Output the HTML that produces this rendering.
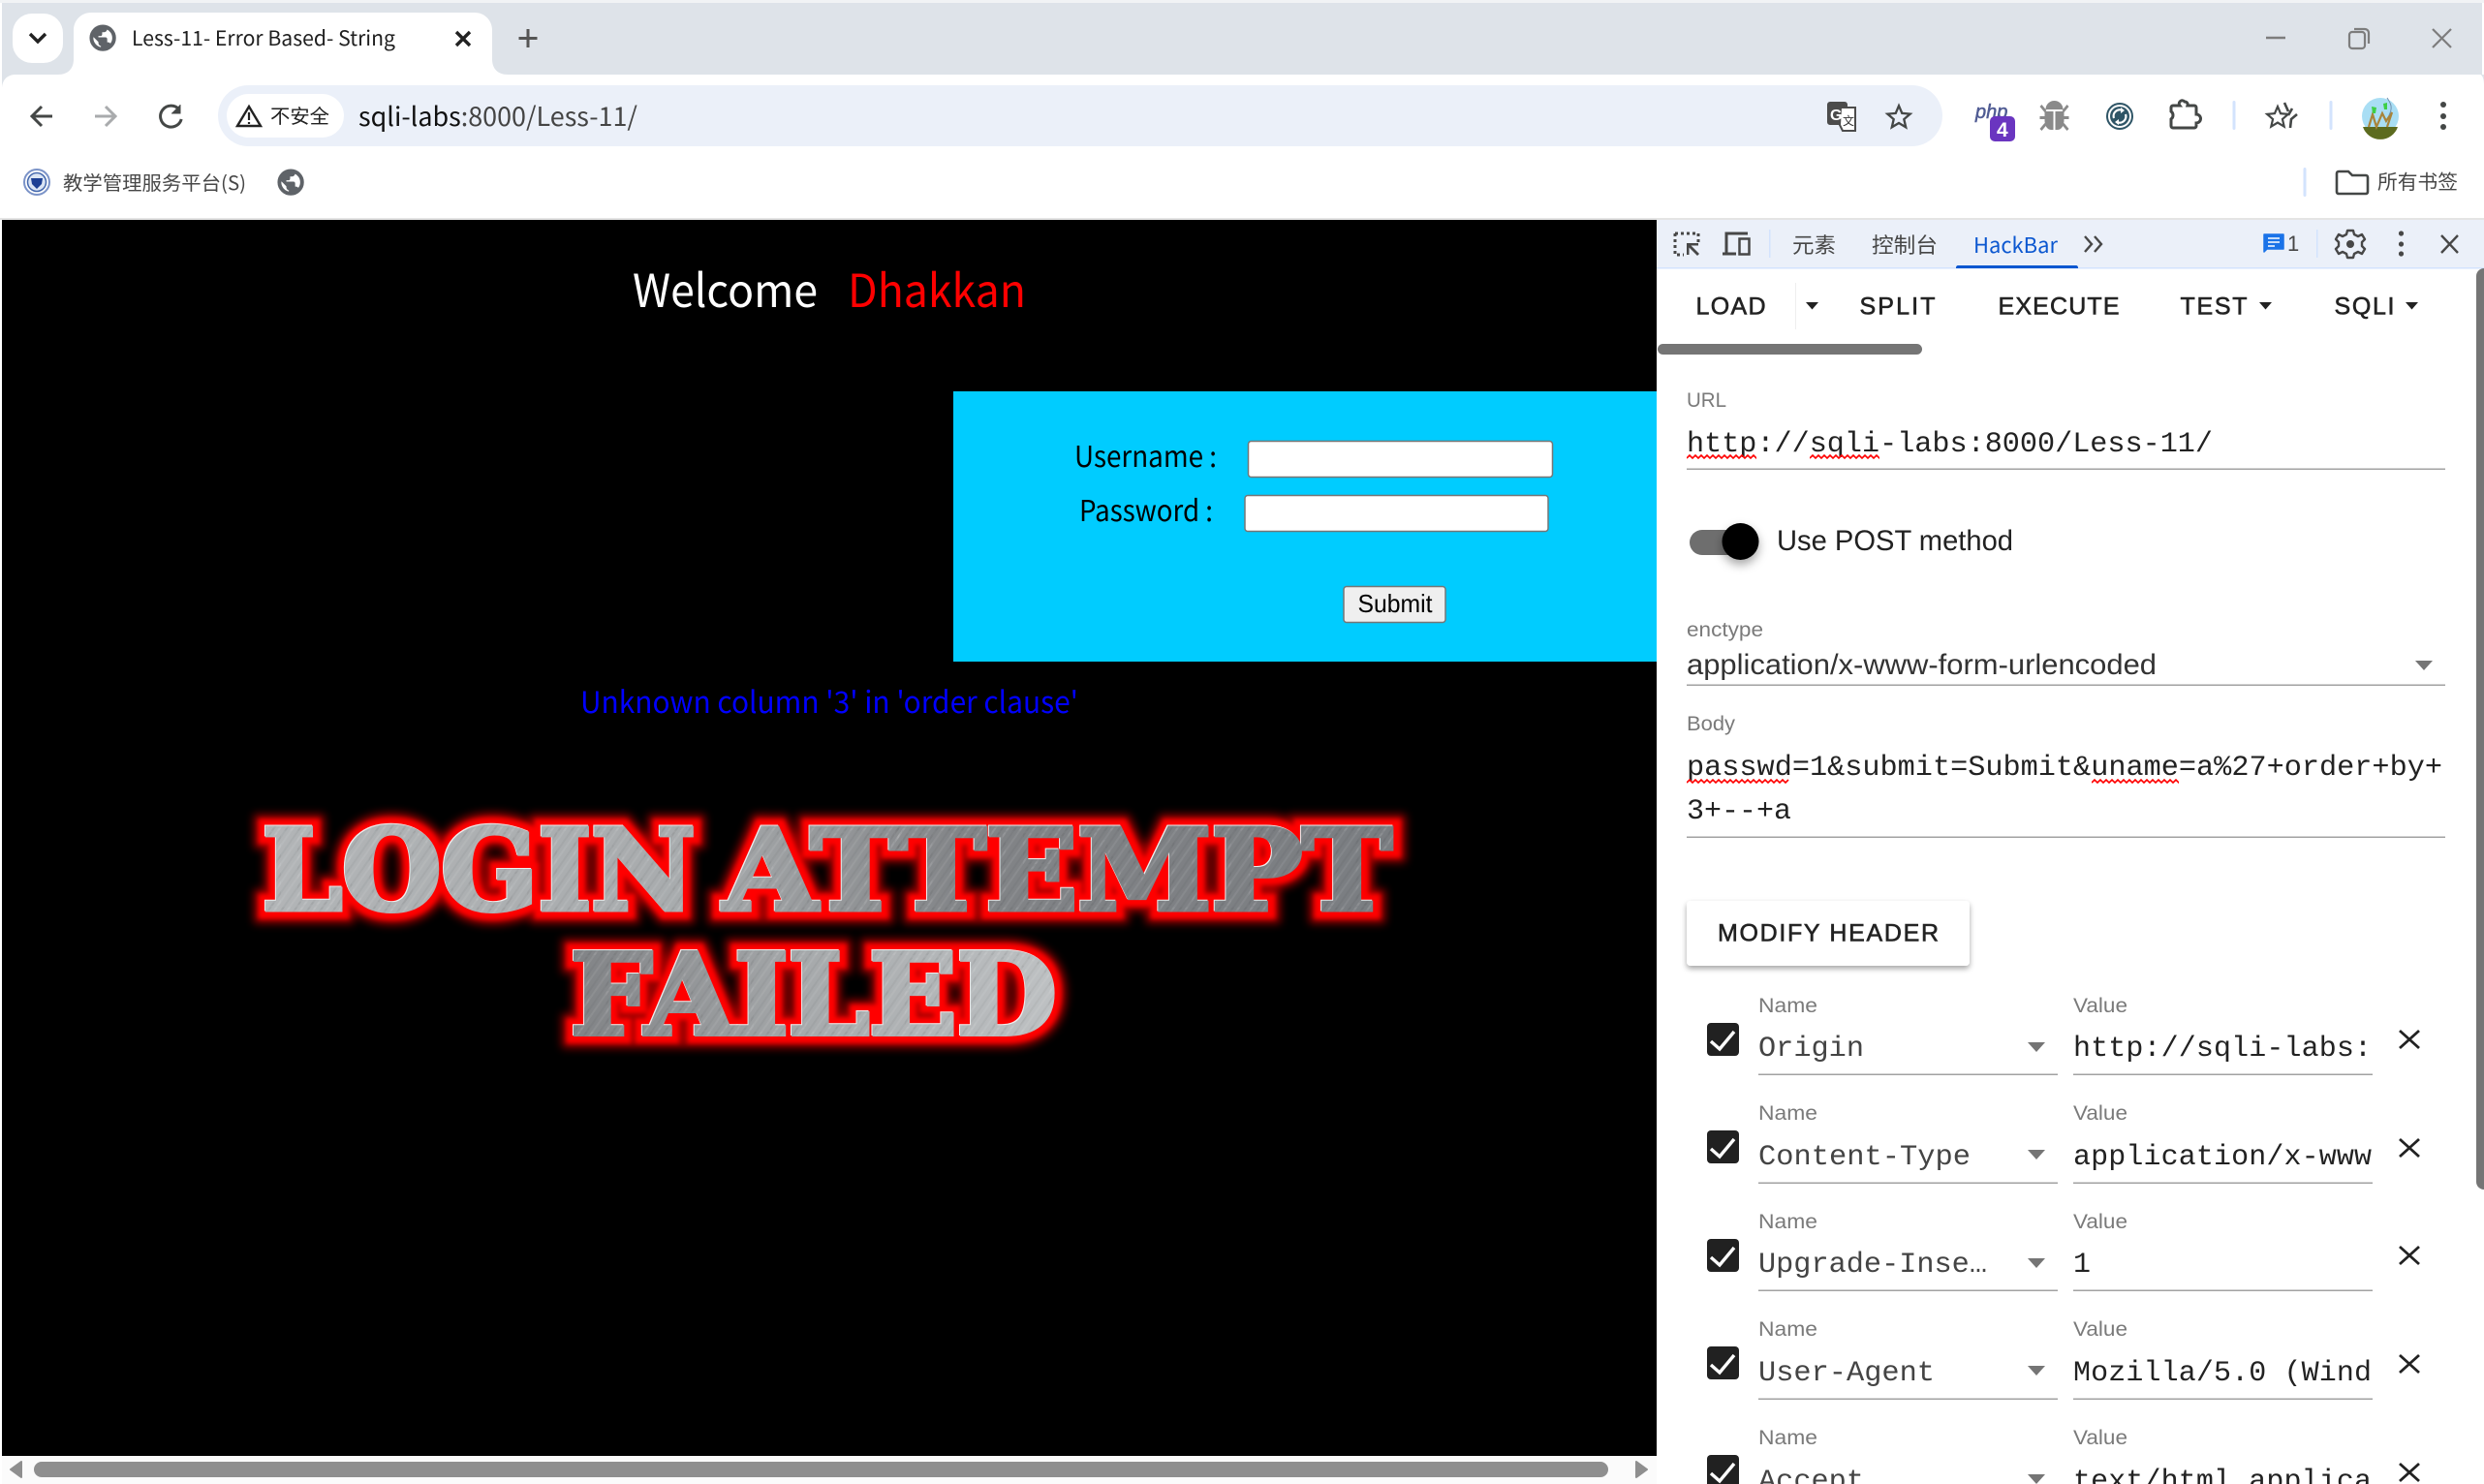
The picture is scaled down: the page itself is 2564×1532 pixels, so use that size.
<!DOCTYPE html>
<html><head><meta charset="utf-8"><title>Less-11- Error Based- String</title>
<style>
html,body{margin:0;padding:0;background:#fff;width:2564px;height:1532px;overflow:hidden}
svg{display:block}
.c{font-family:"Noto Sans CJK SC","Liberation Sans",sans-serif}
.r{font-family:"Liberation Sans",sans-serif}
.m{font-family:"Liberation Mono",monospace;font-size:30px}
.lb{font-family:"Liberation Sans",sans-serif;font-size:21px;fill:#7a7a7a}
.bt{font-family:"Liberation Sans",sans-serif;font-size:25px;fill:#222;stroke:#222;stroke-width:.6}
.ln{fill:#a2a2a2}
.sq{fill:none;stroke:#f00;stroke-width:1.6}
.lg{font-family:"DejaVu Serif","Liberation Serif",serif;font-weight:bold;font-size:115px;stroke-linejoin:miter}
</style></head><body>
<svg width="2564" height="1532" viewBox="0 0 2564 1532" xmlns="http://www.w3.org/2000/svg">
<defs>
<path id="globe" d="M12 2C6.48 2 2 6.48 2 12s4.48 10 10 10 10-4.48 10-10S17.52 2 12 2zm-1 17.93c-3.95-.49-7-3.85-7-7.93 0-.62.08-1.21.21-1.79L9 15v1c0 1.1.9 2 2 2v1.93zm6.9-2.54c-.26-.81-1-1.39-1.9-1.39h-1v-3c0-.55-.45-1-1-1H8v-2h2c.55 0 1-.45 1-1V7h2c1.1 0 2-.9 2-2v-.41c2.93 1.19 5 4.06 5 7.41 0 2.08-.8 3.97-2.1 5.39z" stroke="#5f6368" stroke-width="1"/>
<path id="star" d="M22 9.24l-7.19-.62L12 2 9.19 8.63 2 9.24l5.46 4.73L5.82 21 12 17.27 18.18 21l-1.63-7.03L22 9.24zM12 15.4l-3.76 2.27 1-4.28-3.32-2.88 4.38-.38L12 6.1l1.71 4.04 4.38.38-3.32 2.88 1 4.28L12 15.4z"/>
<linearGradient id="g1" gradientUnits="userSpaceOnUse" x1="270" y1="0" x2="1441" y2="0"><stop offset="0" stop-color="#b2b5b7"/><stop offset=".38" stop-color="#a8abad"/><stop offset=".62" stop-color="#828487"/><stop offset="1" stop-color="#7a7d81"/></linearGradient>
<linearGradient id="g2" gradientUnits="userSpaceOnUse" x1="587" y1="0" x2="1090" y2="0"><stop offset="0" stop-color="#808285"/><stop offset=".5" stop-color="#a7aaac"/><stop offset="1" stop-color="#bec1c3"/></linearGradient>
<pattern id="st" patternUnits="userSpaceOnUse" width="11" height="11" patternTransform="rotate(35)"><rect width="2" height="11" fill="#fff" opacity=".07"/><rect x="6" width="2" height="11" fill="#000" opacity=".04"/></pattern>
<filter id="b1" x="-5%" y="-20%" width="110%" height="140%"><feGaussianBlur stdDeviation="2.4"/></filter>
<filter id="b2" x="-5%" y="-20%" width="110%" height="140%"><feGaussianBlur stdDeviation="4.5"/></filter>
<filter id="sh" x="-20%" y="-30%" width="140%" height="170%"><feDropShadow dx="0" dy="3" stdDeviation="3" flood-color="#000" flood-opacity=".35"/></filter>
<filter id="sh2" x="-60%" y="-60%" width="220%" height="240%"><feDropShadow dx="0" dy="5" stdDeviation="5" flood-color="#000" flood-opacity=".35"/></filter>
<clipPath id="vc"><rect x="2140" y="1040" width="308.500" height="492"/></clipPath>
<g id="cb"><rect x="1762" y="0" width="33" height="34" rx="4" fill="#212121"/><path d="M1766 19l9 8 15-18" fill="none" stroke="#fff" stroke-width="3.400"/></g>
<path id="caret" d="M0 0h18l-9 10z" fill="#757575"/>
<path id="x" d="M0 0l20 18M20 0L0 18" stroke="#222" stroke-width="2.800" fill="none"/>
<path id="squig" d="M0 2l3-3 3 3 3-3 3 3 3-3 3 3 3-3 3 3 3-3 3 3 3-3 3 3 3-3 3 3 3-3 3 3 3-3 3 3 3-3 3 3 3-3 3 3 3-3 3 3 3-3 3 3 3-3 3 3 3-3 3 3 3-3 3 3 3-3 3 3 3-3"/>
</defs>

<!-- Chrome frame -->
<rect width="2564" height="1532" fill="#fff"/>
<rect x="2" y="3" width="2560" height="74" fill="#dee3e9"/>
<rect x="0" y="0" width="2564" height="3" fill="#f1f3f5"/>
<rect x="13" y="14" width="52" height="51" rx="20" fill="#fff"/>
<path d="M31 35l8 8 8-8" fill="none" stroke="#222" stroke-width="3.400"/>
<path d="M60 77c10 0 16-6 16-16V31c0-10 8-18 18-18h396c10 0 18 8 18 18v30c0 10 6 16 16 16z" fill="#fff"/>
<path d="M2 92c0-10 6-15 14-15H2z" fill="#dee3e9"/>
<path d="M2560 77c2 0 4 4 4 10V77z" fill="#dee3e9"/>
<use href="#globe" transform="translate(90.500 23.500) scale(1.3)" fill="#5f6368"/>
<text class="c" x="136" y="47" font-size="21" fill="#1f1f1f" textLength="272" lengthAdjust="spacingAndGlyphs">Less-11- Error Based- String</text>
<path d="M471 33l14 14M485 33l-14 14" stroke="#222" stroke-width="3.400" fill="none"/>
<path d="M545 30v19M535.500 39.500h19" stroke="#555" stroke-width="3" fill="none"/>
<path d="M2339 39h20" stroke="#7d7d7d" stroke-width="2.400"/>
<path d="M2425 36a3 3 0 0 1 3-3h10a3 3 0 0 1 3 3v11a3 3 0 0 1-3 3h-10a3 3 0 0 1-3-3zM2430 30h11a4 4 0 0 1 4 4v11" fill="none" stroke="#7d7d7d" stroke-width="2.200"/>
<path d="M2511 30l19 19M2530 30l-19 19" stroke="#7d7d7d" stroke-width="2.200"/>

<!-- Toolbar -->
<path d="M43 110l-10 10 10 10M33 120h21" fill="none" stroke="#444746" stroke-width="3"/>
<path d="M109 110l10 10-10 10M98 120h21" fill="none" stroke="#a9abad" stroke-width="3"/>
<path d="M185 113a11 11 0 1 0 2.200 10" fill="none" stroke="#444746" stroke-width="3"/><path d="M186 108v9h-9" fill="#444746" stroke="#444746" stroke-width="1"/>
<rect x="225" y="88" width="1780" height="63" rx="31.500" fill="#ebf0f9"/>
<rect x="234" y="97" width="121" height="45" rx="22.500" fill="#fff"/>
<path d="M257 110l-12 20h24z" fill="none" stroke="#222" stroke-width="2.400"/><path d="M257 116v8M257 126v2" stroke="#222" stroke-width="2.200"/>
<text class="c" x="279" y="127" font-size="20" fill="#222" textLength="61" lengthAdjust="spacingAndGlyphs">不安全</text>
<text class="c" x="370" y="130" font-size="27" textLength="288" lengthAdjust="spacingAndGlyphs" fill="#444"><tspan fill="#111">sqli-labs</tspan>:8000/Less-11/</text>

<rect x="1886" y="105" width="21" height="24" rx="3" fill="#4c4c4c"/>
<path d="M1900 111h15v24h-13l-3-6z" fill="#fff" stroke="#4c4c4c" stroke-width="2"/>
<text class="r" x="1889" y="124" font-size="16" font-weight="bold" fill="#fff">G</text>
<text class="c" x="1902" y="129" font-size="12" fill="#333">文</text>
<use href="#star" transform="translate(1942.600 103.300) scale(1.45)" fill="#444746"/>

<text class="r" x="2039" y="122" font-size="20" font-style="italic" fill="#4f5b93" stroke="#4f5b93" stroke-width=".5">php</text>
<rect x="2054" y="120" width="26" height="26" rx="5" fill="#6a35c0"/>
<text class="r" x="2061" y="141" font-size="21" font-weight="bold" fill="#fff">4</text>

<g fill="#8a8a8a" transform="translate(-1.500 0)"><path d="M2113 113a9 9 0 0 1 18 0z"/><path d="M2112 115h9v19h-2c-5 0-7-5-7-10zM2123 115h9v9c0 5-2 10-7 10h-2z"/><path d="M2107 110l2-2 5 6-2 2zM2137 110l-2-2-5 6 2 2zM2107 120h6v3h-6zM2131 120h6v3h-6zM2107 133l5-6 2 2-5 6zM2137 133l-5-6-2 2 5 6z"/></g>

<g transform="translate(-1 0)"><circle cx="2189" cy="120" r="13" fill="#fff" stroke="#2f5566" stroke-width="2"/><circle cx="2189" cy="120" r="10" fill="#2f5566"/>
<path d="M2183 122a6.500 6.500 0 0 1 9-8M2195 118a6.500 6.500 0 0 1-9 8" fill="none" stroke="#fff" stroke-width="2.200"/><path d="M2190 111l4 3-4 3zM2188 129l-4-3 4-3z" fill="#fff"/></g>

<path transform="translate(-3 0)" d="M2246 109h7a3 3 0 0 1 5-4 3 3 0 0 1 3 4h7a2 2 0 0 1 2 2v7a4.500 4.500 0 0 1 0 9v3a2 2 0 0 1-2 2h-22a2 2 0 0 1-2-2v-7a5 5 0 0 0 0-8v-4a2 2 0 0 1 2-2z" fill="none" stroke="#444746" stroke-width="3"/>
<rect x="2304.500" y="104" width="3" height="30" rx="1.500" fill="#d3e3fd"/>
<use href="#star" transform="translate(2334.800 104.500) scale(1.35)" fill="#444746"/>
<path d="M2358 106l4 9M2366 112l-4 7M2371 118l-6 5-1 9" fill="none" stroke="#444746" stroke-width="2.600"/>
<rect x="2404.500" y="104" width="3" height="30" rx="1.500" fill="#d3e3fd"/>

<g transform="translate(-1 0)"><ellipse cx="2458" cy="120" rx="19" ry="19" fill="#a9def4"/>
<path d="M2440 131a19 19 0 0 0 36 0z" fill="#5c6b1f"/>
<path d="M2446 131l4-13 4 13 6-14 4 8 6-9-5 15" fill="none" stroke="#a8843a" stroke-width="2.200"/>
<path d="M2449 110l5 1-1 6-3 0zM2461 107l4-1 0 7-3 0z" fill="#3ecf46"/>
<path d="M2465 101c4 6 6 10 2 18" fill="none" stroke="#6f8fae" stroke-width="1"/></g>
<circle cx="2522" cy="108" r="3" fill="#444746"/><circle cx="2522" cy="120" r="3" fill="#444746"/><circle cx="2522" cy="131" r="3" fill="#444746"/>

<!-- Bookmarks -->
<circle cx="38" cy="188" r="13" fill="#fff" stroke="#7b93c8" stroke-width="2"/>
<circle cx="38" cy="188" r="9.500" fill="#dbe5f4" stroke="#4569ae" stroke-width="1.500"/>
<path d="M32 184h12l-1 6-5 5-5-5z" fill="#1c3f94"/>
<text class="c" x="65" y="196" font-size="20" fill="#474747" textLength="189" lengthAdjust="spacingAndGlyphs">教学管理服务平台(S)</text>
<use href="#globe" transform="translate(284.500 172.500) scale(1.3)" fill="#5f6368"/>
<rect x="2377.500" y="173" width="3" height="30" rx="1.500" fill="#d3e3fd"/>
<path d="M2414 177h10l4 4h14a2 2 0 0 1 2 2v15a2 2 0 0 1-2 2h-28a2 2 0 0 1-2-2v-19a2 2 0 0 1 2-2z" fill="none" stroke="#444746" stroke-width="2.600"/>
<text class="c" x="2454" y="195" font-size="20.500" fill="#474747" textLength="83" lengthAdjust="spacingAndGlyphs">所有书签</text>

<rect x="0" y="225" width="2564" height="2" fill="#e4e4e4"/>

<!-- Page -->
<rect x="2" y="227" width="1708" height="1276" fill="#000"/>
<text class="c" x="653" y="317" font-size="47" fill="#fff" textLength="191" lengthAdjust="spacingAndGlyphs">Welcome</text>
<text class="c" x="875" y="317" font-size="47" fill="#f00" textLength="184" lengthAdjust="spacingAndGlyphs">Dhakkan</text>
<rect x="984" y="404" width="726" height="279" fill="#00ccff"/>
<text class="c" x="1109" y="482" font-size="30" fill="#000" textLength="147" lengthAdjust="spacingAndGlyphs">Username :</text>
<rect x="1288.500" y="455.500" width="314" height="37" rx="3" fill="#fff" stroke="#767676" stroke-width="1.500"/>
<text class="c" x="1114" y="538" font-size="30" fill="#000" textLength="138" lengthAdjust="spacingAndGlyphs">Password :</text>
<rect x="1285" y="511.500" width="313" height="37" rx="3" fill="#fff" stroke="#767676" stroke-width="1.500"/>
<rect x="1387" y="605.500" width="105" height="37" rx="3" fill="#efefef" stroke="#767676" stroke-width="1.500"/>
<text class="r" x="1401.500" y="632" font-size="26" fill="#000" textLength="77" lengthAdjust="spacingAndGlyphs">Submit</text>
<text class="c" x="599" y="736" font-size="31" fill="#0000ff" textLength="514" lengthAdjust="spacingAndGlyphs">Unknown column '3' in 'order clause'</text>

<!-- Login attempt failed image -->
<g class="lg">
<g fill="#900" stroke="#a00000" stroke-width="28" filter="url(#b2)">
<text x="271" y="939" textLength="447" lengthAdjust="spacingAndGlyphs">LOGIN</text>
<text x="747" y="939" textLength="690" lengthAdjust="spacingAndGlyphs">ATTEMPT</text>
<text x="589" y="1067.500" textLength="502" lengthAdjust="spacingAndGlyphs">FAILED</text>
</g>
<g fill="#f00" stroke="#f00" stroke-width="19" filter="url(#b1)">
<text x="271" y="939" textLength="447" lengthAdjust="spacingAndGlyphs">LOGIN</text>
<text x="747" y="939" textLength="690" lengthAdjust="spacingAndGlyphs">ATTEMPT</text>
<text x="589" y="1067.500" textLength="502" lengthAdjust="spacingAndGlyphs">FAILED</text>
</g>
<g fill="#eee" stroke="#eee" stroke-width="5">
<text x="270" y="938" textLength="447" lengthAdjust="spacingAndGlyphs">LOGIN</text>
<text x="746" y="938" textLength="690" lengthAdjust="spacingAndGlyphs">ATTEMPT</text>
<text x="588" y="1066.500" textLength="502" lengthAdjust="spacingAndGlyphs">FAILED</text>
</g>
<g fill="url(#g1)" stroke="url(#g1)" stroke-width="5">
<text x="271" y="939" textLength="447" lengthAdjust="spacingAndGlyphs">LOGIN</text>
<text x="747" y="939" textLength="690" lengthAdjust="spacingAndGlyphs">ATTEMPT</text>
</g>
<text x="589" y="1067.500" textLength="502" lengthAdjust="spacingAndGlyphs" fill="url(#g2)" stroke="url(#g2)" stroke-width="5">FAILED</text>
<g fill="url(#st)" stroke="url(#st)" stroke-width="5">
<text x="271" y="939" textLength="447" lengthAdjust="spacingAndGlyphs">LOGIN</text>
<text x="747" y="939" textLength="690" lengthAdjust="spacingAndGlyphs">ATTEMPT</text>
<text x="589" y="1067.500" textLength="502" lengthAdjust="spacingAndGlyphs">FAILED</text>
</g>
</g>

<!-- page scrollbar -->
<rect x="2" y="1503" width="1708" height="29" fill="#fbfbfb"/>
<path d="M22 1509v16l-11-8z" fill="#8f8f8f" stroke="#8f8f8f" stroke-width="2" stroke-linejoin="round"/>
<rect x="35" y="1509" width="1625" height="16" rx="8" fill="#8f8f8f"/>
<path d="M1689 1509v16l11-8z" fill="#8f8f8f" stroke="#8f8f8f" stroke-width="2" stroke-linejoin="round"/>

<!-- DevTools -->
<rect x="1710" y="227" width="854" height="1305" fill="#fff"/>
<rect x="1710" y="227" width="854" height="50" fill="#ebf0f9"/>
<rect x="1710" y="276" width="854" height="1.500" fill="#d3e3fd"/>
<path d="M1729 241h24v9M1729 241v22h9" fill="none" stroke="#474747" stroke-width="3" stroke-dasharray="3 3"/>
<path d="M1741 251h12v2.500h-7.500l8.500 8.500-2 2-8.500-8.500v7.500H1741z" fill="#474747"/>
<path d="M1782 262v-21h22M1778 262h14" fill="none" stroke="#474747" stroke-width="3"/><rect x="1795.500" y="246.500" width="10" height="16" fill="none" stroke="#474747" stroke-width="2.500"/>
<rect x="1826" y="237" width="1.500" height="29" fill="#d3e3fd"/>
<text class="c" x="1850" y="261" font-size="22" fill="#474747" textLength="45" lengthAdjust="spacingAndGlyphs">元素</text>
<text class="c" x="1932" y="261" font-size="22" fill="#474747" textLength="68" lengthAdjust="spacingAndGlyphs">控制台</text>
<text class="c" x="2037" y="261" font-size="22" fill="#0b57d0" textLength="87" lengthAdjust="spacingAndGlyphs">HackBar</text>
<path d="M2019 277v-1c0-1 1-2 2-2h122c1 0 2 1 2 2v1z" fill="#0b57d0"/>
<path d="M2152 244l7 8-7 8M2162 244l7 8-7 8" fill="none" stroke="#474747" stroke-width="2.400"/>
<path d="M2337 242h20v15h-17l-3 3z" fill="#1a73e8" stroke="#1a73e8" stroke-width="1.500" stroke-linejoin="round"/><path d="M2341 246h12M2341 250h12M2341 254h7" stroke="#fff" stroke-width="1.600"/>
<text class="r" x="2361" y="259" font-size="22" fill="#474747">1</text>
<rect x="2391" y="237" width="1.500" height="29" fill="#d3e3fd"/>
<g transform="translate(-2 0)"><path d="M2425 238h6l1 4 4 2 4-2 3 5-3 3v4l3 3-3 5-4-2-4 2-1 4h-6l-1-4-4-2-4 2-3-5 3-3v-4l-3-3 3-5 4 2 4-2z" fill="none" stroke="#474747" stroke-width="2.400" stroke-linejoin="round"/><circle cx="2428" cy="252" r="4" fill="#474747"/></g>
<circle cx="2478.500" cy="241" r="2.600" fill="#474747"/><circle cx="2478.500" cy="252" r="2.600" fill="#474747"/><circle cx="2478.500" cy="262" r="2.600" fill="#474747"/>
<path d="M2520 243l17 18M2537 243l-17 18" stroke="#474747" stroke-width="2.400"/>

<!-- HackBar -->
<text class="bt" x="1750.500" y="324.500" textLength="72" lengthAdjust="spacing">LOAD</text>
<rect x="1853" y="292" width="1" height="48" fill="#eee"/>
<path d="M1864 312h13l-6.500 7.500z" fill="#222"/>
<text class="bt" x="1919.500" y="324.500" textLength="78" lengthAdjust="spacing">SPLIT</text>
<text class="bt" x="2062.500" y="324.500" textLength="125" lengthAdjust="spacing">EXECUTE</text>
<text class="bt" x="2250.500" y="324.500" textLength="69" lengthAdjust="spacing">TEST</text>
<path d="M2332 312h13l-6.500 7.500z" fill="#222"/>
<text class="bt" x="2409.500" y="324.500" textLength="62" lengthAdjust="spacing">SQLI</text>
<path d="M2483 312h13l-6.500 7.500z" fill="#222"/>
<rect x="1711" y="355" width="273" height="11" rx="5.500" fill="#757575"/>
<path d="M2556 285a8 8 0 0 1 8-8v951a8 8 0 0 1-8-8z" fill="#757575"/>

<text class="lb" x="1741" y="420" textLength="41" lengthAdjust="spacingAndGlyphs">URL</text>
<text class="m" x="1741" y="466" fill="#222" textLength="543" lengthAdjust="spacingAndGlyphs">http://sqli-labs:8000/Less-11/</text>
<svg x="1741" y="468" width="72" height="8"><use href="#squig" class="sq" y="3"/></svg>
<svg x="1868" y="468" width="72" height="8"><use href="#squig" class="sq" y="3"/></svg>
<rect class="ln" x="1741" y="483.500" width="783" height="1.500"/>

<rect x="1744" y="547" width="56" height="26" rx="13" fill="#6e6e6e"/>
<circle cx="1796.500" cy="559" r="19" fill="#000" filter="url(#sh2)"/>
<text class="r" x="1834" y="568" font-size="30" fill="#222" textLength="244" lengthAdjust="spacingAndGlyphs">Use POST method</text>

<text class="lb" x="1741" y="657" textLength="79" lengthAdjust="spacingAndGlyphs">enctype</text>
<text class="r" x="1741" y="696" font-size="30" fill="#333" textLength="485" lengthAdjust="spacingAndGlyphs">application/x-www-form-urlencoded</text>
<use href="#caret" x="2493" y="682"/>
<rect class="ln" x="1741" y="706.500" width="783" height="1.500"/>

<text class="lb" x="1741" y="754" textLength="50" lengthAdjust="spacingAndGlyphs">Body</text>
<text class="m" x="1741" y="800" fill="#222" textLength="780" lengthAdjust="spacingAndGlyphs">passwd=1&amp;submit=Submit&amp;uname=a%27+order+by+</text>
<text class="m" x="1741" y="845" fill="#222" textLength="108" lengthAdjust="spacingAndGlyphs">3+--+a</text>
<svg x="1741" y="803" width="108" height="8"><use href="#squig" class="sq" y="3"/></svg>
<svg x="2159" y="803" width="90" height="8"><use href="#squig" class="sq" y="3"/></svg>
<rect class="ln" x="1741" y="863.500" width="783" height="1.500"/>

<rect x="1741" y="930" width="292" height="67" rx="4" fill="#fff" filter="url(#sh)"/>
<text class="bt" x="1773" y="971.500" textLength="228" lengthAdjust="spacing">MODIFY HEADER</text>

<!-- rows -->
<g>
<text class="lb" x="1815" y="1045" textLength="61" lengthAdjust="spacingAndGlyphs">Name</text><text class="lb" x="2140" y="1045" textLength="56" lengthAdjust="spacingAndGlyphs">Value</text>
<text class="lb" x="1815" y="1156" textLength="61" lengthAdjust="spacingAndGlyphs">Name</text><text class="lb" x="2140" y="1156" textLength="56" lengthAdjust="spacingAndGlyphs">Value</text>
<text class="lb" x="1815" y="1268" textLength="61" lengthAdjust="spacingAndGlyphs">Name</text><text class="lb" x="2140" y="1268" textLength="56" lengthAdjust="spacingAndGlyphs">Value</text>
<text class="lb" x="1815" y="1379" textLength="61" lengthAdjust="spacingAndGlyphs">Name</text><text class="lb" x="2140" y="1379" textLength="56" lengthAdjust="spacingAndGlyphs">Value</text>
<text class="lb" x="1815" y="1491" textLength="61" lengthAdjust="spacingAndGlyphs">Name</text><text class="lb" x="2140" y="1491" textLength="56" lengthAdjust="spacingAndGlyphs">Value</text>
</g>
<use href="#cb" y="1056"/><use href="#cb" y="1167"/><use href="#cb" y="1279"/><use href="#cb" y="1390"/><use href="#cb" y="1502"/>
<g class="m" fill="#444">
<text x="1815" y="1090" textLength="109" lengthAdjust="spacingAndGlyphs">Origin</text>
<text x="1815" y="1202" textLength="219" lengthAdjust="spacingAndGlyphs">Content-Type</text>
<text x="1815" y="1313" textLength="236" lengthAdjust="spacingAndGlyphs">Upgrade-Inse…</text>
<text x="1815" y="1425" textLength="182" lengthAdjust="spacingAndGlyphs">User-Agent</text>
<text x="1815" y="1537" textLength="109" lengthAdjust="spacingAndGlyphs">Accept</text>
</g>
<g class="m" fill="#222" clip-path="url(#vc)" letter-spacing=".12">
<text x="2140" y="1090">http://sqli-labs:8000/</text>
<text x="2140" y="1202">application/x-www-form-urlencoded</text>
<text x="2140" y="1313">1</text>
<text x="2140" y="1425">Mozilla/5.0 (Windows NT 10.0)</text>
<text x="2140" y="1537">text/html,application/xhtml</text>
</g>
<use href="#caret" x="2093" y="1076"/><use href="#caret" x="2093" y="1187"/><use href="#caret" x="2093" y="1299"/><use href="#caret" x="2093" y="1410"/><use href="#caret" x="2093" y="1522"/>
<rect class="ln" x="1815" y="1108.500" width="309" height="1.500"/><rect class="ln" x="2140" y="1108.500" width="309" height="1.500"/>
<rect class="ln" x="1815" y="1220.500" width="309" height="1.500"/><rect class="ln" x="2140" y="1220.500" width="309" height="1.500"/>
<rect class="ln" x="1815" y="1331.500" width="309" height="1.500"/><rect class="ln" x="2140" y="1331.500" width="309" height="1.500"/>
<rect class="ln" x="1815" y="1443.500" width="309" height="1.500"/><rect class="ln" x="2140" y="1443.500" width="309" height="1.500"/>
<use href="#x" x="2477" y="1064"/><use href="#x" x="2477" y="1176"/><use href="#x" x="2477" y="1287"/><use href="#x" x="2477" y="1399"/><use href="#x" x="2477" y="1511"/>
</svg>
</body></html>
